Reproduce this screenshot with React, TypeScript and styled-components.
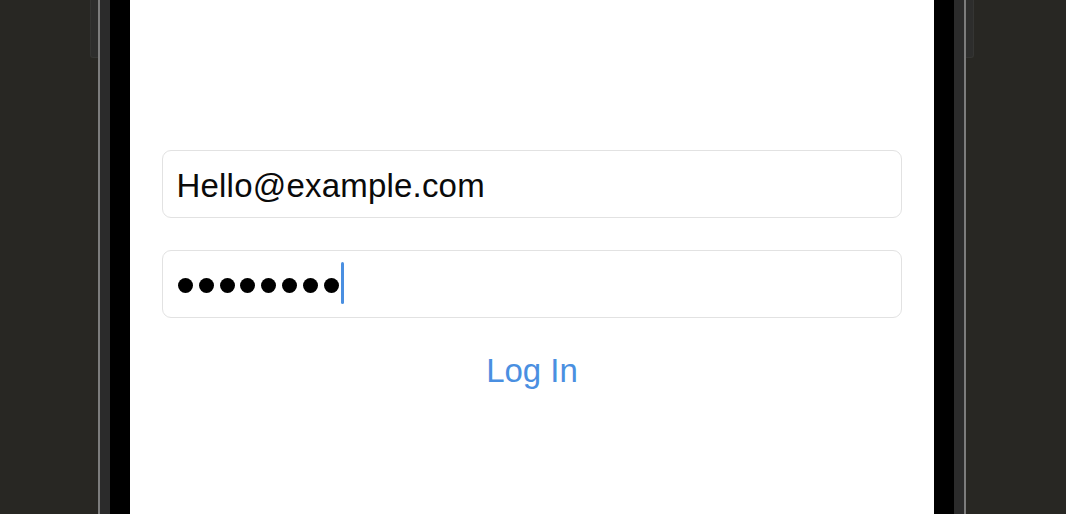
import styled, { createGlobalStyle } from "styled-components";

const GlobalStyle = createGlobalStyle`
  html, body {
    margin: 0;
    padding: 0;
    height: 100%;
    background: #282723;
    overflow: hidden;
  }
  #root {
    height: 100%;
  }
`;

const App = () => {
  return (
    <>
      <GlobalStyle />
      <Page>
        <SideButton side="left" />
        <Phone>
          <Band>
            <Bezel>
              <Screen>
                <Form>
                  <Field>
                    <FieldText>Hello@example.com</FieldText>
                  </Field>
                  <Field>
                    <Dots>
                      {Array.from({ length: 8 }).map((_, i) => (
                        <Dot key={i} />
                      ))}
                    </Dots>
                    <Caret />
                  </Field>
                  <LoginButton>Log In</LoginButton>
                </Form>
              </Screen>
            </Bezel>
          </Band>
        </Phone>
        <SideButton side="right" />
      </Page>
    </>
  );
};

const Page = styled.div`
  height: 100%;
  display: flex;
  align-items: stretch;
  padding-left: 90px;
  box-sizing: border-box;
`;

const SideButton = styled.div<{ side: "left" | "right" }>`
  width: 8px;
  height: 58px;
  box-sizing: border-box;
  background: #2d2d2c;
  border: 1px solid #353533;
  border-top: none;
  border-${(p) => (p.side === "left" ? "right" : "left")}: none;
  border-bottom-${(p) => p.side}-radius: 3px;
`;

const Phone = styled.div`
  display: flex;
  border-left: 2px solid #7c7c7c;
  border-right: 2px solid #7c7c7c;
`;

const Band = styled.div`
  display: flex;
  padding: 0 10px;
  background: #2b2b2b;
`;

const Bezel = styled.div`
  display: flex;
  padding: 0 20px;
  background: #000;
`;

const Screen = styled.div`
  width: 804px;
  background: #fff;
  padding: 150px 32px 0;
  box-sizing: border-box;
`;

const Form = styled.div`
  display: flex;
  flex-direction: column;
  gap: 32px;
`;

const Field = styled.div`
  height: 68px;
  box-sizing: border-box;
  border: 1px solid #e2e2e2;
  border-radius: 9px;
  display: flex;
  align-items: center;
  padding-left: 15px;
  background: #fff;
`;

const FieldText = styled.span`
  font-family: "Liberation Sans", Arial, sans-serif;
  font-size: 33px;
  letter-spacing: 0.2px;
  color: #0a0a0a;
  padding-top: 3px;
  margin-left: -1.5px;
`;

const Dots = styled.div`
  display: flex;
  gap: 5.8px;
  margin-top: 2px;
`;

const Dot = styled.span`
  width: 15px;
  height: 15px;
  border-radius: 50%;
  background: #000;
`;

const Caret = styled.span`
  width: 3px;
  height: 42px;
  margin-left: 2px;
  margin-bottom: 3px;
  border-radius: 1.5px;
  background: #4a8fe1;
`;

const LoginButton = styled.button`
  align-self: center;
  margin-top: 2px;
  border: none;
  background: none;
  padding: 0;
  font-family: "Liberation Sans", Arial, sans-serif;
  font-size: 33px;
  color: #4a8fe1;
  cursor: pointer;
`;

export default App;
